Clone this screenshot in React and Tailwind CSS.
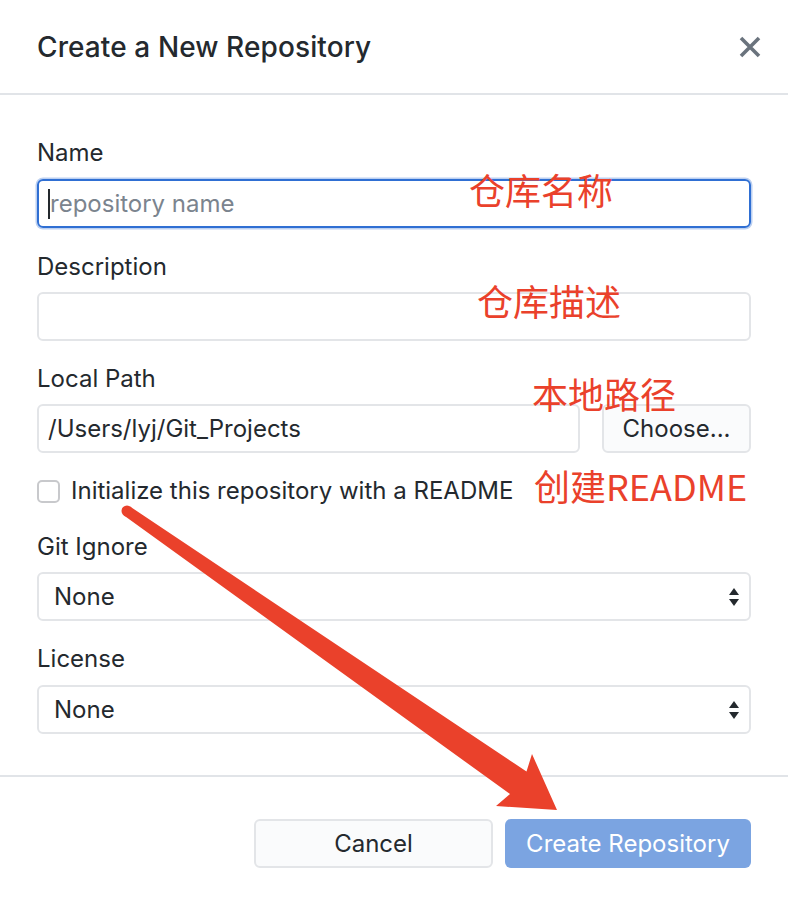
import React from "react";

const Label = ({ children, className = "" }) => (
  <div className={`h-[28px] leading-[28px] text-[24px] text-[#24292e] ${className}`}>{children}</div>
);

const SelectBox = ({ className = "" }) => (
  <div className={`h-[49px] rounded-[6px] border-2 border-[#e3e5e8] bg-white flex items-center justify-between pl-[15px] pr-[8px] ${className}`}>
    <span className="text-[24px] text-[#24292e]">None</span>
    <svg width="14" height="26" viewBox="0 0 14 26">
      <polygon points="7,4 12,11 2,11" fill="#24292e" />
      <polygon points="2,15 12,15 7,22" fill="#24292e" />
    </svg>
  </div>
);

export default function App() {
  return (
    <div
      className="relative w-[788px] h-[908px] bg-white overflow-hidden"
      style={{ fontFamily: "Inter, 'Liberation Sans', 'Noto Sans CJK SC', sans-serif" }}
    >
      {/* Header */}
      <div className="h-[95px] flex items-center justify-between pl-[37px] pr-[25px] border-b-2 border-[#e1e4e8]">
        <h1 className="text-[28px] font-medium text-[#24292e] tracking-[0.1px]">Create a New Repository</h1>
        <svg width="24" height="24" viewBox="0 0 24 24" className="mr-[1px]">
          <path d="M3 3 L21 21 M21 3 L3 21" stroke="#6a737d" strokeWidth="3.6" strokeLinecap="butt" />
        </svg>
      </div>

      {/* Body */}
      <div className="flex flex-col px-[37px]">
        <Label className="mt-[44px]">Name</Label>
        <div className="mt-[12px] h-[49px] rounded-[6px] border-2 border-[#2f6fd3] shadow-[0_0_0_1.5px_#bcd0f1] flex items-center pl-[9px]">
          <div className="w-[2px] h-[30px] bg-[#24292e]" />
          <span className="text-[24px] text-[#7b848e]">repository name</span>
        </div>

        <Label className="mt-[25px]">Description</Label>
        <div className="mt-[11px] h-[49px] rounded-[6px] border-2 border-[#e3e5e8]" />

        <Label className="mt-[24px]">Local Path</Label>
        <div className="mt-[11px] flex gap-[22px]">
          <div className="flex-1 h-[49px] rounded-[6px] border-2 border-[#e3e5e8] flex items-center pl-[9px]">
            <span className="text-[24px] text-[#24292e]">/Users/lyj/Git_Projects</span>
          </div>
          <div className="w-[149px] h-[49px] rounded-[6px] border-2 border-[#e3e5e8] bg-[#fafbfc] flex items-center justify-center">
            <span className="text-[24px] text-[#24292e]">Choose...</span>
          </div>
        </div>

        <div className="mt-[24px] h-[28px] flex items-center gap-[11px]">
          <div className="w-[23px] h-[23px] rounded-[5px] border-2 border-[#c8c9cc] bg-white" />
          <span className="text-[24px] text-[#24292e]">Initialize this repository with a README</span>
        </div>

        <Label className="mt-[28px]">Git Ignore</Label>
        <SelectBox className="mt-[11px]" />

        <Label className="mt-[24px]">License</Label>
        <SelectBox className="mt-[12px]" />
      </div>

      {/* Footer */}
      <div className="mt-[41px] border-t-2 border-[#e1e4e8] flex justify-end gap-[12px] px-[37px] pt-[42px]">
        <div className="w-[239px] h-[49px] rounded-[6px] border-2 border-[#e3e5e8] bg-[#fafbfc] flex items-center justify-center">
          <span className="text-[24px] text-[#24292e]">Cancel</span>
        </div>
        <div className="w-[246px] h-[49px] rounded-[6px] bg-[#7ba4e1] flex items-center justify-center">
          <span className="text-[24px] text-white">Create Repository</span>
        </div>
      </div>

      {/* Annotations */}
      <div
        className="absolute inset-0 pointer-events-none text-[#ea412b]"
        style={{ fontFamily: "'Noto Sans CJK SC', sans-serif" }}
      >
        <div className="absolute left-[469px] top-[171px] text-[36px] leading-none">仓库名称</div>
        <div className="absolute left-[477px] top-[282px] text-[36px] leading-none">仓库描述</div>
        <div className="absolute left-[532px] top-[375px] text-[36px] leading-none">本地路径</div>
        <div className="absolute left-[534px] top-[467px] text-[36px] leading-none">创建README</div>
        <svg className="absolute inset-0" width="788" height="908" viewBox="0 0 788 908">
          <polygon
            points="130,506.5 526.5,771.5 532,754 557,810 496,806 510,794 124,515.5"
            fill="#ea412b"
          />
          <circle cx="127" cy="511" r="5.5" fill="#ea412b" />
        </svg>
      </div>
    </div>
  );
}
